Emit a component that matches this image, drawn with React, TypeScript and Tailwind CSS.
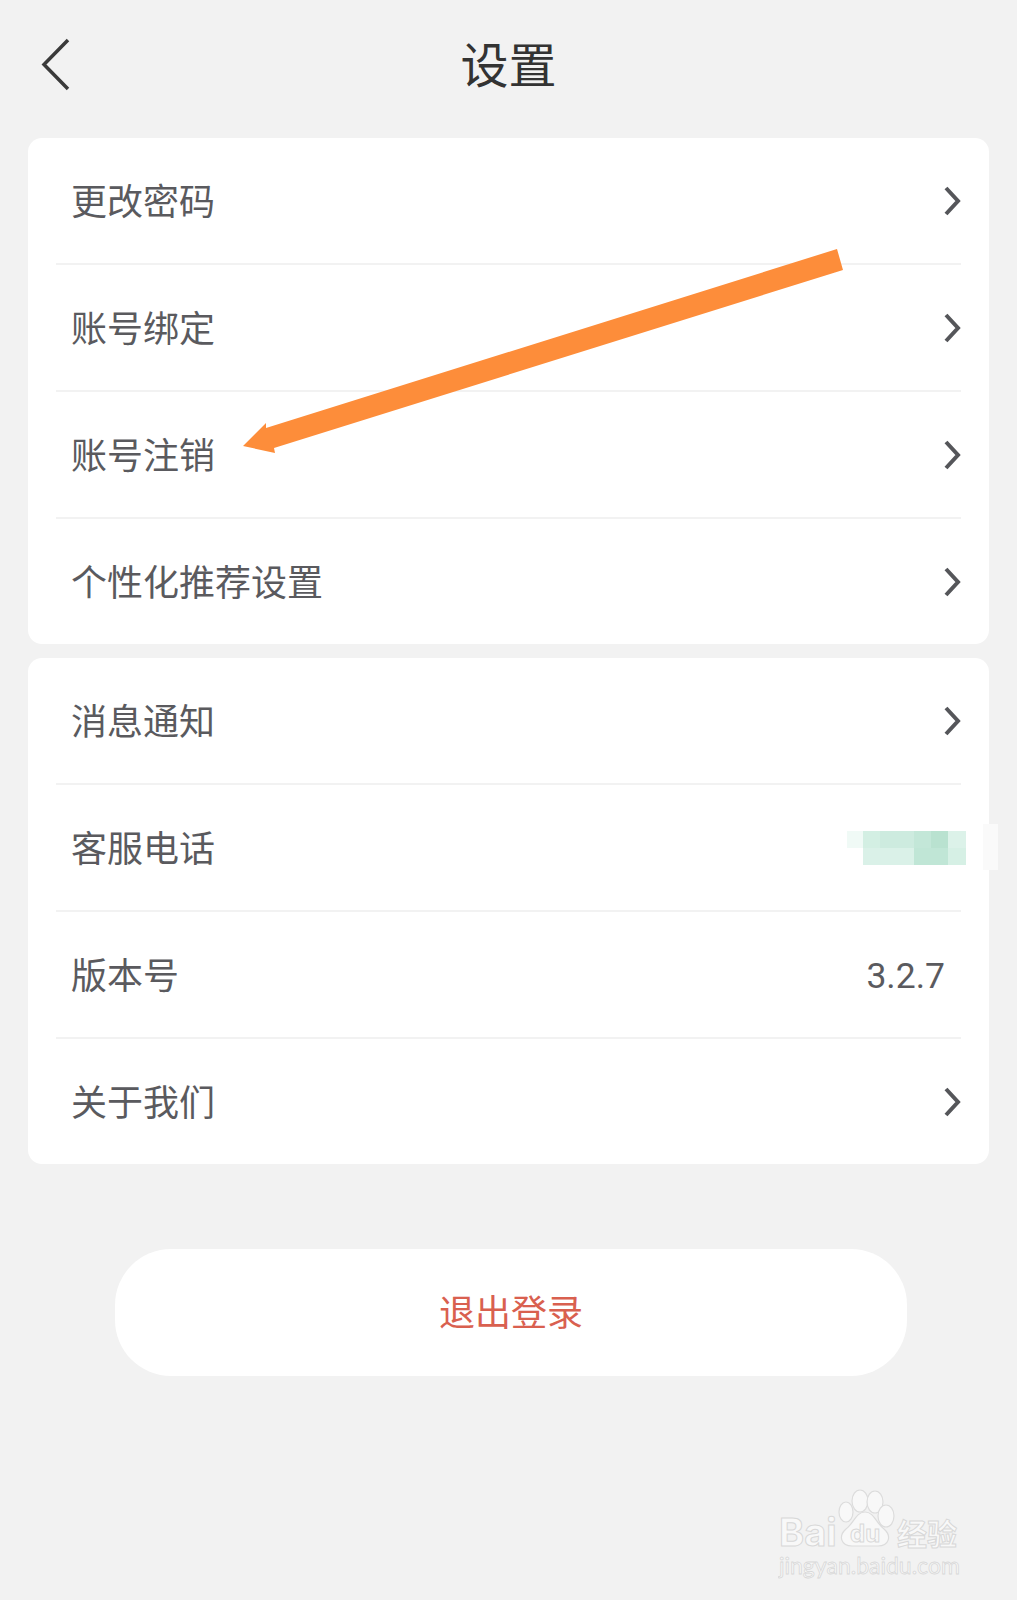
const firstGroup = ['更改密码', '账号绑定', '账号注销', '个性化推荐设置'];

function Chevron() {
  return (
    <svg width="18" height="30" viewBox="0 0 18 30" fill="none" className="shrink-0">
      <path d="M3 2 L15 15 L3 28" stroke="#55565a" strokeWidth="4" />
    </svg>
  );
}

function Row({ label, last, children }: { label: string; last?: boolean; children?: React.ReactNode }) {
  return (
    <div className={`mx-7 flex items-center justify-between pl-[15px] ${last ? 'h-[125px]' : 'h-[127px] border-b-2 border-[#f2f2f2]'}`}>
      <span className="pb-[4px] text-[36px] text-[#5a5a5e]">{label}</span>
      {children ?? <Chevron />}
    </div>
  );
}

// mosaic that hides the phone number
function PhoneMosaic() {
  return (
    <svg width="119" height="34" viewBox="0 0 119 34" className="shrink-0">
      <rect x="0" y="0" width="16" height="17" fill="#f0faf6" />
      <rect x="16" y="0" width="17" height="17" fill="#d3efe3" />
      <rect x="33" y="0" width="34" height="17" fill="#cdebdf" />
      <rect x="67" y="0" width="17" height="17" fill="#c3e7d8" />
      <rect x="84" y="0" width="17" height="17" fill="#b9e2d0" />
      <rect x="101" y="0" width="18" height="17" fill="#dcf2e9" />
      <rect x="16" y="17" width="51" height="17" fill="#daf1e8" />
      <rect x="67" y="17" width="34" height="17" fill="#c0e6d6" />
      <rect x="101" y="17" width="18" height="17" fill="#d6f0e5" />
    </svg>
  );
}

function Watermark() {
  return (
    <svg width="190" height="96" viewBox="0 0 190 96" className="absolute right-[49px] bottom-[17px]">
      <g fill="#f8f8f8" stroke="#dcdcdc" strokeWidth="1.2">
        <ellipse cx="68" cy="25" rx="7" ry="10" />
        <ellipse cx="82" cy="14" rx="8" ry="11" />
        <ellipse cx="97" cy="15" rx="8" ry="11" />
        <ellipse cx="108" cy="29" rx="8" ry="11" />
        <path d="M87 25 C96 25 98 36 106 42 C114 49 111 59 100 59 L74 59 C63 59 60 49 68 42 C76 36 78 25 87 25 Z" />
      </g>
      <g fontFamily="Inter, sans-serif" fill="#f8f8f8" stroke="#d8d8d8" strokeWidth="1">
        <text x="1" y="59" fontSize="38" fontWeight="700">Bai</text>
        <text x="72" y="55" fontSize="24" fontWeight="700">du</text>
        <text x="1" y="87" fontSize="23" fontFamily="Lato, sans-serif" strokeWidth="0.8">jingyan.baidu.com</text>
      </g>
      <text x="119" y="58" fontSize="30" fontWeight="700" fontFamily="'Noto Sans CJK SC', sans-serif" fill="#f8f8f8" stroke="#d8d8d8" strokeWidth="1">经验</text>
    </svg>
  );
}

export default function App() {
  return (
    <div className="relative h-[1600px] overflow-hidden bg-[#f2f2f2] font-['Noto_Sans_CJK_SC',sans-serif]">
      {/* header */}
      <header className="relative flex h-[138px] items-start justify-center pt-[25px]">
        <svg width="32" height="54" viewBox="0 0 32 54" fill="none" className="absolute top-[38px] left-[40px]">
          <path d="M28 2 L4 26.5 L28 51" stroke="#3a3a3a" strokeWidth="3.5" />
        </svg>
        <h1 className="text-[48px] leading-[74px] font-normal text-[#333]">设置</h1>
      </header>

      <div className="mx-7 flex flex-col gap-[14px]">
        <section className="rounded-[14px] bg-white">
          {firstGroup.map((label, i) => (
            <Row key={label} label={label} last={i === firstGroup.length - 1} />
          ))}
        </section>

        <section className="rounded-[14px] bg-white">
          <Row label="消息通知" />
          <Row label="客服电话">
            <div className="-mr-[5px]">
              <PhoneMosaic />
            </div>
          </Row>
          <Row label="版本号">
            <span className="mt-[4px] mr-4 text-[35.5px] text-[#5a5a5e] font-['Roboto',sans-serif]">3.2.7</span>
          </Row>
          <Row label="关于我们" last />
        </section>
      </div>

      <div className="mt-[85px] flex justify-center">
        <button className="ml-[5px] h-[127px] w-[792px] rounded-[56px] bg-white pb-[6px] text-[36px] text-[#d9604f]">
          退出登录
        </button>
      </div>

      {/* smudge left over the phone number edge */}
      <div className="absolute top-[824px] left-[983px] h-[46px] w-[15px] bg-[#fafafa]" />

      {/* annotation arrow */}
      <svg width="1017" height="1600" viewBox="0 0 1017 1600" className="pointer-events-none absolute top-0 left-0">
        <polygon points="837,249 843,270 274,448 275,453 243,446 266,423 266,428" fill="#fd8d3a" />
      </svg>

      <Watermark />
    </div>
  );
}
